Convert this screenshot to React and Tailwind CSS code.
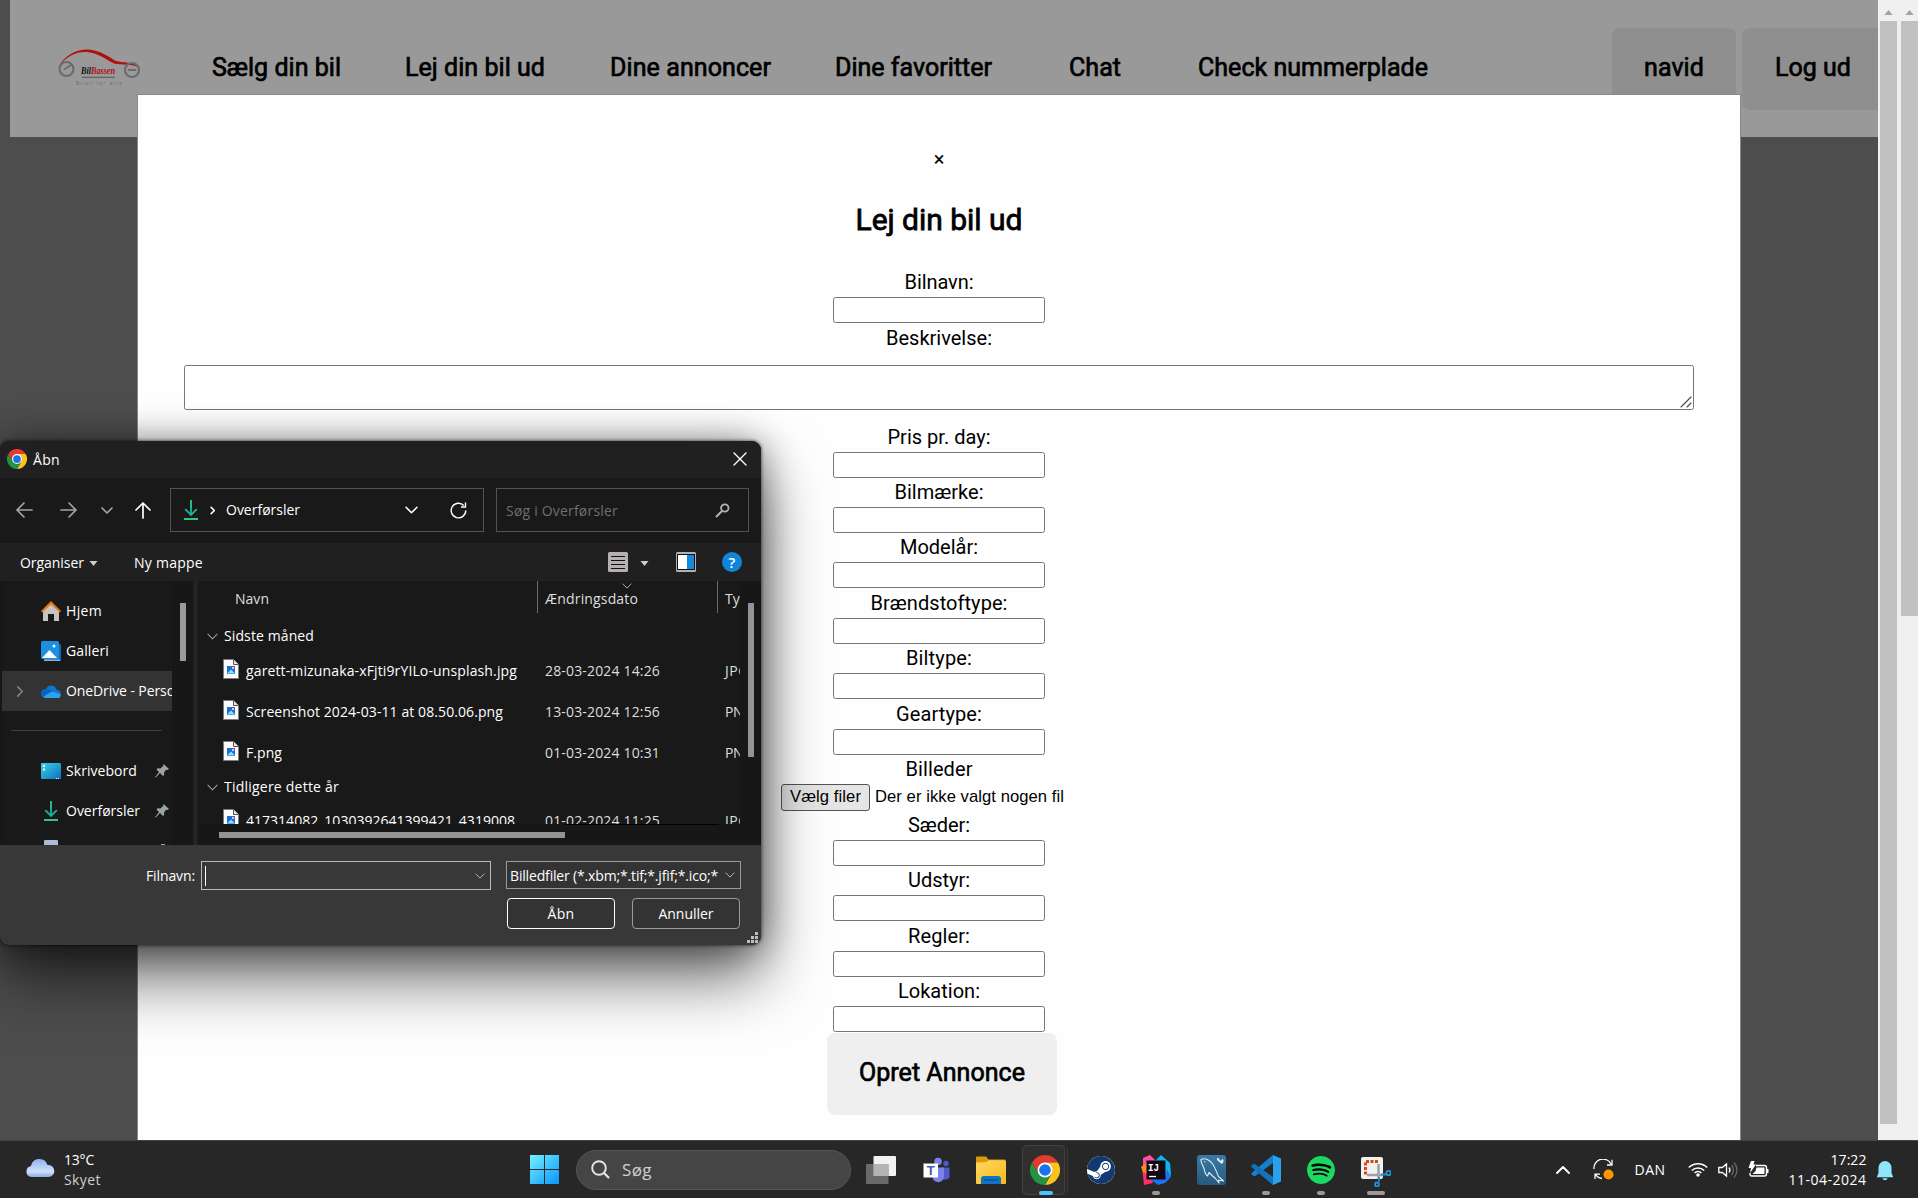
import React, { useLayoutEffect, useRef, useState } from "react";
import { SiSpotify, SiSteam } from "react-icons/si";

const ROBOTO = "font-[Roboto,sans-serif]";
const UI = "font-['Open_Sans','Noto_Sans',sans-serif]";

/* Single-line text whose tracking is adjusted to fill a given width. */
function Fit({ w, className = "", children }) {
  const ref = useRef(null);
  const [ls, setLs] = useState(0);
  useLayoutEffect(() => {
    const natural = ref.current.getBoundingClientRect().width;
    setLs((w - natural) / String(children).length);
  }, [w, children]);
  return (
    <span ref={ref} className={`inline-block shrink-0 whitespace-pre ${className}`} style={{ letterSpacing: `${ls}px` }}>
      {children}
    </span>
  );
}

function Chrome({ className }) {
  return (
    <svg viewBox="0 0 48 48" className={className}>
      <path fill="#e33b2e" d="M44.785 12A24 24 0 0 0 3.215 12L13.608 30 24 24V12Z" />
      <path fill="#fcc31e" d="M44.785 12H24V24L34.392 30 24 48A24 24 0 0 0 44.785 12Z" />
      <path fill="#229342" d="M3.215 12A24 24 0 0 0 24 48L34.392 30 24 24 13.608 30Z" />
      <circle cx="24" cy="24" r="12" fill="#fff" />
      <circle cx="24" cy="24" r="9.3" fill="#1a73e8" />
    </svg>
  );
}

function Line({ d, className, vb = "0 0 16 16", sw = 1.4 }) {
  return (
    <svg viewBox={vb} className={className} fill="none" stroke="currentColor" strokeWidth={sw} strokeLinecap="round" strokeLinejoin="round">
      <path d={d} />
    </svg>
  );
}

const ChevDown = ({ className, sw = 1.5 }) => <Line vb="0 0 12 7" d="M1 1l5 5 5-5" sw={sw} className={className} />;

function Download({ className }) {
  return (
    <svg viewBox="0 0 14 20" className={className} fill="none" strokeWidth="1.9">
      <path stroke="#2ec08a" d="M7 0v8" />
      <path stroke="#1fae9c" d="M7 8v7M1.2 9.2L7 15l5.8-5.8" />
      <path stroke="#35cf8b" d="M0 19h14" />
    </svg>
  );
}

function Logo() {
  return (
    <svg viewBox="0 0 84 42" className="h-[42px] w-[84px]">
      <path d="M1 18C8 6 20 1 30 1.500C42 2 51 9 58 13C64 15 76 13 82 20C74 15.500 64 17 56 15.500C48 12 41 5 29 4C18 3.500 9 8 1 18Z" fill="#b0100f" />
      <circle cx="8.500" cy="21" r="7" fill="none" stroke="#6c6c6c" strokeWidth="2.200" />
      <path d="M6 21.500L10 19L14 16" fill="none" stroke="#6c6c6c" strokeWidth="2" />
      <circle cx="74" cy="22" r="7" fill="none" stroke="#6c6c6c" strokeWidth="2.200" />
      <path d="M70 22H78" stroke="#6c6c6c" strokeWidth="2" />
      <text x="23" y="25.500" fontFamily="Liberation Serif" fontStyle="italic" fontWeight="700" fontSize="9.500" textLength="34" lengthAdjust="spacingAndGlyphs">
        <tspan fill="#111">Bil</tspan><tspan fill="#b0100f">Bassen</tspan>
      </text>
      <path d="M24 29.300H57" stroke="#555" strokeWidth="1" />
      <text x="18" y="36.500" fontFamily="Liberation Sans" fontSize="5" fill="#6e6e6e" textLength="46">Biler for alle</text>
    </svg>
  );
}

const NAV = [
  { t: "Sælg din bil", w: 129, ml: "ml-[70px]" },
  { t: "Lej din bil ud", w: 140, ml: "ml-[64px]" },
  { t: "Dine annoncer", w: 161, ml: "ml-[65px]" },
  { t: "Dine favoritter", w: 157, ml: "ml-[64px]" },
  { t: "Chat", w: 52, ml: "ml-[77px]" },
  { t: "Check nummerplade", w: 230, ml: "ml-[77px]" },
];

function Header() {
  return (
    <header className={`relative ml-[10px] flex h-[137px] items-start overflow-hidden bg-[#999] text-[25px] text-black [-webkit-text-stroke:0.7px_black] ${ROBOTO}`}>
      <div className="ml-[48px] mt-[48px] [-webkit-text-stroke:0px]"><Logo /></div>
      <nav className="flex pt-[50px] leading-[36px]">
        {NAV.map((n) => (
          <div key={n.t} className={n.ml}>
            <Fit w={n.w}>{n.t}</Fit>
          </div>
        ))}
      </nav>
      <div className="absolute left-[1602px] top-[28px] flex gap-[6px]">
        <div className="flex h-[82px] w-[124px] items-center justify-center rounded-[8px] bg-[#8f8f8f] pb-[2px]"><Fit w={60}>navid</Fit></div>
        <div className="flex h-[82px] w-[150px] items-center rounded-[8px] bg-[#8f8f8f] pb-[2px] pl-[33px]"><Fit w={76}>Log ud</Fit></div>
      </div>
    </header>
  );
}

const Label = ({ w, children }) => (
  <div className="flex h-[29.900px] shrink-0 items-center justify-center"><Fit w={w}>{children}</Fit></div>
);
const Box = () => <input className="block h-[26px] w-[212px] shrink-0 rounded-[2.5px] border border-[#767676] bg-white" />;

function Field({ w, children }) {
  return (
    <div className="flex h-[55.45px] shrink-0 flex-col items-center">
      <Label w={w}>{children}</Label>
      <Box />
    </div>
  );
}

function Modal() {
  return (
    <section className={`absolute left-[137px] top-[94px] flex h-[1060px] w-[1604px] flex-col items-center border border-[#888] bg-[#fefefe] text-[20px] leading-[24px] text-black ${ROBOTO}`}>
      <div className="mt-[52px] h-[24px] text-[20px]">×</div>
      <h2 className="mt-[31px] flex h-[36px] items-center text-[30px] font-normal [-webkit-text-stroke:0.8px_black]"><Fit w={167}>Lej din bil ud</Fit></h2>
      <div className="mt-[29.300px] flex h-[55.45px] flex-col items-center"><Label w={69}>Bilnavn:</Label><Box /></div>
      <Label w={106}>Beskrivelse:</Label>
      <div className="mb-[12px] mt-[12px] flex h-[45px] w-[1510px] shrink-0 items-end justify-end rounded-[2.5px] border border-[#767676] bg-white p-px">
        <Line vb="0 0 12 12" d="M1 11L11 1M7 11l4-4" sw={1.1} className="h-[12px] w-[12px] text-[#444]" />
      </div>
      <Field w={103}>Pris pr. day:</Field>
      <Field w={89}>Bilmærke:</Field>
      <Field w={78}>Modelår:</Field>
      <Field w={137}>Brændstoftype:</Field>
      <Field w={66}>Biltype:</Field>
      <Field w={86}>Geartype:</Field>
      <div className="flex h-[55.8px] shrink-0 flex-col items-center">
        <Label w={67}>Billeder</Label>
        <div className="flex h-[26.5px] w-[316px] items-center font-['Liberation_Sans',sans-serif] text-[16.600px]">
          <span className="flex h-[26.5px] w-[89px] items-center justify-center rounded-[3px] border border-[#555] bg-[#e5e5e5]"><Fit w={71}>Vælg filer</Fit></span>
          <Fit w={189} className="ml-[5px]">Der er ikke valgt nogen fil</Fit>
        </div>
      </div>
      <Field w={62}>Sæder:</Field>
      <Field w={62}>Udstyr:</Field>
      <Field w={62}>Regler:</Field>
      <Field w={82}>Lokation:</Field>
      <div className="ml-[6px] mt-[0.900px] flex h-[82px] w-[230px] shrink-0 items-center justify-center rounded-[8px] bg-[#efefef] pb-[1px] text-[25px] [-webkit-text-stroke:0.7px_black]"><Fit w={166}>Opret Annonce</Fit></div>
    </section>
  );
}

function Arrow() {
  return <svg viewBox="0 0 10 6" className="mx-auto mt-[9px] h-[5px] w-[9px]"><path d="M5 0l5 6H0z" fill="#a3a3a3" /></svg>;
}

function Scrollbars() {
  return (
    <div className="flex h-[1140px] w-[40px] gap-[4px] bg-[#f0f0f0] pl-[2px]">
      <div className="w-[17px]"><div className="h-[21px] pt-px"><Arrow /></div><div className="h-[1103px] bg-[#c1c1c1]" /></div>
      <div className="w-[17px]"><div className="h-[21px] pt-px"><Arrow /></div><div className="h-[595px] bg-[#c1c1c1]" /></div>
    </div>
  );
}

/* ---------- File dialog ---------- */

function FileIcon() {
  return (
    <svg viewBox="0 0 16 20" className="h-[20px] w-[16px]">
      <path d="M.5.5h10l5 5v14H.5z" fill="#fbfbfb" stroke="#7d7d7d" />
      <path d="M10.500.5v5h5" fill="#e4e4e4" stroke="#555" />
      <rect x="4" y="7" width="8" height="8" fill="#1a6fd0" />
      <path d="M8 7h4v4z" fill="#6a55b8" />
      <path d="M4 14.500l4-4 4 4z" fill="#8fe0fb" />
      <circle cx="10" cy="9" r=".9" fill="#fff" />
    </svg>
  );
}

function Pin() {
  return (
    <svg viewBox="0 0 14 14" className="h-[14px] w-[14px]">
      <path d="M8.500 0L14 5l-1.500 1-1.300-.2L9 8.500l.2 2.500L8 12 5 9 .8 13.500 0 13.200 4 8 1.500 5.500l1-1.200 2.700.3L8 2.200z" fill="#9aa3a8" />
    </svg>
  );
}

function SideRow({ icon, label, w, pin, cls = "", chev }) {
  return (
    <div className={`flex h-[40px] w-[170px] shrink-0 items-center overflow-hidden pl-[14px] ${cls}`}>
      <div className="w-[12px] shrink-0">{chev && <Line vb="0 0 7 12" d="M1 1l5 5-5 5" sw={1.7} className="h-[11px] w-[8px] text-[#858585]" />}</div>
      <div className="ml-[13px] flex w-[20px] shrink-0 justify-center">{icon}</div>
      <Fit w={w} className="ml-[5px]">{label}</Fit>
      {pin && <span className="ml-auto mr-[3px]"><Pin /></span>}
    </div>
  );
}

function Sidebar() {
  return (
    <aside className="flex h-[264px] w-[193px] overflow-hidden bg-[#171717] pl-[2px]">
      <div className="flex w-[170px] flex-col bg-[#191919] pt-[9.500px]">
        <SideRow label="Hjem" w={36} icon={
          <svg viewBox="0 0 20 20" className="h-[20px] w-[20px]"><path d="M2 9l8-7 8 7v11h-5v-7H7v7H2z" fill="#c4c4c4" /><path d="M0 10L10 0l10 10-1.200 1.500L10 3.500 1.200 11.500z" fill="#e87817" /></svg>} />
        <SideRow label="Galleri" w={43} icon={
          <svg viewBox="0 0 20 20" className="h-[20px] w-[20px]"><path d="M17 2l3 1.500V20H3v-2h14z" fill="#1069b8" /><path d="M3 18.500h16V20H3z" fill="#79b4e8" /><rect width="18" height="18" rx="1.500" fill="#1b8fe0" /><path d="M1 17l7.500-8 7.500 8z" fill="#fff" /><circle cx="13" cy="5" r="1.500" fill="#fff" /></svg>} />
        <SideRow chev cls="bg-[#333] pt-px" label="OneDrive - Perso" w={109} icon={
          <svg viewBox="0 0 20 13" className="h-[13px] w-[20px]"><path d="M5 4a5.500 5.500 0 0 1 10.500 1A4 4 0 0 1 16 13H4.500A4.300 4.300 0 0 1 5 4z" fill="#1173cf" /><path d="M5 4c3 0 5 2 8 4l-9 5A4.300 4.300 0 0 1 5 4z" fill="#0a62bd" /><path d="M2 12l8-5c3-1 5 1 9 2a2.500 2.500 0 0 1-2.500 4H4.500z" fill="#2aa4ec" /></svg>} />
        <div className="ml-[9px] mt-[19.500px] h-px w-[151px] shrink-0 bg-[#3f3f3f]" />
        <div className="h-[20px] shrink-0" />
        <SideRow pin label="Skrivebord" w={71} icon={
          <svg viewBox="0 0 20 16" className="h-[16px] w-[20px]"><defs><linearGradient id="dk" x2="1" y2="1"><stop stopColor="#38d6e0" /><stop offset="1" stopColor="#0f6cc5" /></linearGradient></defs><rect width="20" height="16" rx="1" fill="url(#dk)" /><path d="M2 2h2v2H2zM2 5.500h2v2H2zM15 15h1v1h-1zM17 15h1v1h-1z" fill="#e8ffff" /></svg>} />
        <SideRow pin label="Overførsler" w={74} icon={<Download className="h-[20px] w-[14px]" />} />
        <div className="flex h-[14px] shrink-0 items-start pl-[42px] pt-[8.500px]"><div className="h-[14px] w-[14px] rounded-t-[1px] bg-[#a9bdd6]" /><div className="ml-[103px] mt-[4px] h-[2px] w-[4px] bg-[#9aa3a8]" /></div>
      </div>
      <div className="ml-[8px] mt-[22px] h-[58px] w-[6px] bg-[#9a9a9a]" />
    </aside>
  );
}

function FileRow({ name, w, date, type, tw }) {
  return (
    <div className="flex h-[41px] shrink-0 items-center pl-[25px]">
      <div className="mb-[4px] shrink-0"><FileIcon /></div>
      <div className="ml-[7px] w-[299px] shrink-0 text-white"><Fit w={w}>{name}</Fit></div>
      <div className="w-[180px] shrink-0 text-[#dedede]"><Fit w={115}>{date}</Fit></div>
      <div className="shrink-0 text-[#dedede]"><Fit w={tw}>{type}</Fit></div>
    </div>
  );
}

function Group({ label, w }) {
  return (
    <div className="flex h-[27px] shrink-0 items-center pl-[9px]">
      <ChevDown sw={1.2} className="h-[7px] w-[11px] text-[#999]" />
      <Fit w={w} className="ml-[6px] text-white">{label}</Fit>
    </div>
  );
}

function FileList() {
  return (
    <div className="flex h-[264px] w-[563px] bg-[#171717]">
      <div className="w-[542px] shrink-0 bg-[#191919]">
        <div className="relative flex h-[243px] flex-col overflow-hidden">
          <div className="relative flex h-[32px] shrink-0 items-stretch text-[#dedede]">
            <div className="flex w-[340px] shrink-0 items-center border-r border-[#6a6a6a] pl-[37px] pt-[3px]"><Fit w={34}>Navn</Fit></div>
            <div className="flex w-[180px] shrink-0 items-center border-r border-[#6a6a6a] pl-[7px] pt-[3px]"><Fit w={93}>Ændringsdato</Fit></div>
            <div className="flex shrink-0 items-center pl-[7px] pt-[3px]"><Fit w={15}>Ty</Fit></div>
            <ChevDown sw={1.2} className="absolute left-[424px] top-[2px] h-[6px] w-[10px] text-[#aaa]" />
          </div>
          <div className="h-[9.500px] shrink-0" />
          <Group label="Sidste måned" w={90} />
          <div className="h-px shrink-0" />
          <FileRow name="garett-mizunaka-xFjti9rYILo-unsplash.jpg" w={271} date="28-03-2024 14:26" type="JPG" tw={24} />
          <FileRow name="Screenshot 2024-03-11 at 08.50.06.png" w={257} date="13-03-2024 12:56" type="PNG" tw={28} />
          <FileRow name="F.png" w={36} date="01-03-2024 10:31" type="PNG" tw={28} />
          <Group label="Tidligere dette år" w={115} />
          <FileRow name="417314082_1030392641399421_4319008" w={269} date="01-02-2024 11:25" type="JPG" tw={24} />
        </div>
        <div className="flex flex-col bg-[#171717]">
          <div className="ml-[367px] h-px w-[154px] bg-black" />
          <div className="ml-[21px] mt-[7px] h-[6px] w-[346px] bg-[#949494]" />
          <div className="h-[7px]" />
        </div>
      </div>
      <div className="ml-[8px] mt-[22px] h-[154px] w-[6px] bg-[#949494]" />
    </div>
  );
}

function Dialog() {
  return (
    <div className={`absolute left-0 top-[441px] flex h-[504px] w-[761px] flex-col overflow-hidden rounded-[9px] bg-[#191919] text-[14px] leading-[20px] text-white ${UI}`}>
      <div className="flex h-[37px] items-center bg-[#202020] pl-[7px] pr-[14px]">
        <Chrome className="mb-px h-[20px] w-[20px]" />
        <Fit w={27} className="ml-[6px]">Åbn</Fit>
        <Line d="M1 1l12 12M13 1L1 13" vb="0 0 14 14" sw={1.4} className="mb-px ml-auto h-[14px] w-[14px]" />
      </div>
      <div className="flex h-[65px] items-center pb-px text-[#a3a3a3]">
        <Line d="M1 8h15M8 1L1 8l7 7" vb="0 0 17 16" sw={1.7} className="ml-[16px] h-[16px] w-[17px]" />
        <Line d="M1 8h15M9 1l7 7-7 7" vb="0 0 17 16" sw={1.7} className="ml-[27px] h-[16px] w-[17px]" />
        <ChevDown sw={1.7} className="ml-[24px] h-[7px] w-[12px]" />
        <Line d="M8 1v15M1 8l7-7 7 7" vb="0 0 16 17" sw={1.7} className="ml-[22px] h-[17px] w-[16px] text-white" />
        <div className="ml-[19px] flex h-[44px] w-[314px] items-center border border-[#535353] text-white">
          <Download className="ml-[13px] h-[20px] w-[14px]" />
          <Line vb="0 0 6 10" d="M1 1.500L4.500 5 1 8.500" sw={1.7} className="ml-[12px] h-[9px] w-[6px]" />
          <Fit w={74} className="mb-px ml-[10px]">Overførsler</Fit>
          <ChevDown className="ml-auto h-[8px] w-[13px]" />
          <svg viewBox="0 0 17 17" className="ml-[32px] mr-[16px] h-[17px] w-[17px]" fill="none" stroke="#fff" strokeWidth="1.4"><path d="M15.800 8.500a7.300 7.300 0 1 1-2-5M15.500.5v4.500H11" /></svg>
        </div>
        <div className="ml-[12px] flex h-[44px] w-[253px] items-center border border-[#535353] text-[#6f6f6f]">
          <Fit w={112} className="ml-[9px] mt-px">Søg i Overførsler</Fit>
          <svg viewBox="0 0 15 15" className="ml-auto mr-[18px] h-[15px] w-[15px]" fill="none" stroke="#b5b5b5"><circle cx="9.800" cy="5" r="3.700" strokeWidth="1.8" /><path d="M7 8L1 14" strokeWidth="2" /></svg>
        </div>
      </div>
      <div className="flex h-[38px] items-center bg-[#202020] pl-[20px] pt-[2px]">
        <Fit w={64}>Organiser</Fit>
        <svg viewBox="0 0 8 5" className="ml-[5px] h-[5px] w-[9px]"><path d="M0 0h8L4 5z" fill="#ccc" /></svg>
        <Fit w={69} className="ml-[36px]">Ny mappe</Fit>
        <svg viewBox="0 0 20 20" className="mb-[2px] ml-auto h-[20px] w-[20px]"><rect width="20" height="20" rx="1.500" fill="#b5b1b2" /><path d="M3 4.500h14M3 8.500h14M3 12.500h14M3 16.500h14" stroke="#111" /></svg>
        <svg viewBox="0 0 8 5" className="ml-[12px] h-[5px] w-[9px]"><path d="M0 0h8L4 5z" fill="#ccc" /></svg>
        <svg viewBox="0 0 20 20" className="mb-[2px] ml-[27px] h-[20px] w-[20px]"><rect width="20" height="20" rx="1.500" fill="#b5b1b2" /><rect x="1.500" y="2.500" width="17" height="15" fill="#fff" stroke="#111" /><path d="M11 3h7v14h-7z" fill="#1489dd" /></svg>
        <div className="mb-[2px] ml-[26px] mr-[19px] flex h-[20px] w-[20px] items-center justify-center rounded-full bg-[#0f86d9] text-[15px] font-semibold">?</div>
      </div>
      <div className="flex h-[264px] bg-[#171717]">
        <Sidebar />
        <div className="w-[5px] shrink-0 bg-[#202020] pl-[2px]"><div className="h-full w-px bg-[#2b2b2b]" /></div>
        <FileList />
      </div>
      <div className="relative flex h-[100px] flex-col bg-[#383838] pt-[16px]">
        <div className="flex">
          <Fit w={49} className="ml-[146px] mt-[5px]">Filnavn:</Fit>
          <div className="ml-[6px] flex h-[29px] w-[290px] items-center border border-[#b9b9b9] pl-[3px] pr-[5px]">
            <div className="h-[20px] w-px bg-white" />
            <ChevDown sw={1.2} className="ml-auto h-[6px] w-[10px] text-[#b5b5b5]" />
          </div>
          <div className="ml-[15px] flex h-[28px] w-[235px] items-center border border-[#9b9b9b] bg-[#333] pl-[3px] pr-[5px]">
            <Fit w={208} className="mt-px">Billedfiler (*.xbm;*.tif;*.jfif;*.ico;*</Fit>
            <ChevDown sw={1.2} className="ml-auto h-[6px] w-[10px] text-[#b5b5b5]" />
          </div>
        </div>
        <div className="ml-[507px] mt-[8px] flex gap-[17px]">
          <div className="flex h-[31px] w-[108px] items-center justify-center rounded-[4px] border border-white bg-[#333]"><Fit w={27}>Åbn</Fit></div>
          <div className="flex h-[31px] w-[108px] items-center justify-center rounded-[4px] border border-[#9b9b9b] bg-[#333]"><Fit w={55}>Annuller</Fit></div>
        </div>
        <svg viewBox="0 0 11 11" className="absolute bottom-[2px] right-[3px] h-[11px] w-[11px]"><path d="M8 0h3v3H8zM4 4h3v3H4zM8 4h3v3H8zM0 8h3v3H0zM4 8h3v3H4zM8 8h3v3H8z" fill="#bdbdbd" /></svg>
      </div>
    </div>
  );
}

/* ---------- Taskbar ---------- */

const TaskView = () => (
  <svg viewBox="0 0 30 30" className="h-[30px] w-[30px]"><rect x="7.500" y="1" width="22.500" height="20" rx="1" fill="#f2f2f2" /><rect x="0" y="9" width="22.500" height="20" rx="1" fill="#777" opacity=".85" /><rect x="7.500" y="9" width="15" height="12" fill="#b4b4b4" /></svg>
);
const Teams = () => (
  <svg viewBox="0 0 26 26" className="h-[26px] w-[27px]"><circle cx="22.500" cy="6.500" r="2.700" fill="#5059c9" /><path d="M18 10.500h8v7a4 4 0 0 1-8 2z" fill="#5059c9" /><circle cx="14.500" cy="4.500" r="3.800" fill="#7b83eb" /><path d="M9 10.500h11.500v9a5.700 5.700 0 0 1-11.500 0z" fill="#7b83eb" /><rect x="0" y="6.500" width="14.500" height="14" fill="#fff" /><text x="7.300" y="18" textAnchor="middle" fontFamily="Liberation Sans" fontWeight="700" fontSize="13" fill="#4b53bc">T</text></svg>
);
const Explorer = () => (
  <svg viewBox="0 0 30 28" className="h-[28px] w-[30px]"><defs><linearGradient id="fo" x2="1" y2="1"><stop stopColor="#ffd766" /><stop offset="1" stopColor="#fbb917" /></linearGradient></defs><path d="M0 1.500Q0 .5 1 .5h9l2.500 3H29v6H0z" fill="#dc9a0b" /><path d="M0 6.500l10-.2 3-2H29q1 0 1 1V27q0 1-1 1H1q-1 0-1-1z" fill="url(#fo)" /><path d="M5 28v-5q0-3 3-3h14q3 0 3 3v5z" fill="#0f74c4" /><path d="M8 24h14" stroke="#0a4a88" strokeWidth="1.200" /></svg>
);
const IntelliJ = () => (
  <svg viewBox="0 0 30 30" className="h-[30px] w-[30px]"><path d="M2 3l7-3 6 6-8 12-5-4z" fill="#ff4fa3" /><path d="M1 12l6 2 5 14-9 2z" fill="#fe2f6a" /><path d="M0 12l5-4 4 12-7-3z" fill="#fb8a1e" /><path d="M14 6l6-6 9 8 1 12-5 5-3-15z" fill="#0bb7ee" /><path d="M8 24h16l2-10 4 8-6 6-7 2-4-3z" fill="#1a72f2" /><rect x="5.500" y="5.500" width="19" height="19" fill="#120914" /><text x="7" y="16" fontFamily="Liberation Mono" fontWeight="700" fontSize="11.500" textLength="11" lengthAdjust="spacingAndGlyphs" fill="#fff">IJ</text><path d="M8 21.500h7" stroke="#fff" strokeWidth="1.300" /></svg>
);
/* MySQL Workbench: leaping dolphin outline on a blue tile */
const Workbench = () => (
  <svg viewBox="0 0 29 30" className="h-[30px] w-[29px]">
    <defs><linearGradient id="wb" x2="0" y2="1"><stop stopColor="#3b7aa5" /><stop offset="1" stopColor="#265a80" /></linearGradient></defs>
    <rect width="29" height="30" rx="3" fill="url(#wb)" />
    <g fill="none" stroke="#dfeaf2" strokeWidth="1.100" strokeLinejoin="round" strokeLinecap="round">
      <path d="M4 4.500C8 2.500 13 5 16 9.500C18.500 13.500 20 18 21.500 21.500L26.500 26L21.500 25L22 28L18.500 23.500C16 21.500 13.500 19 12 17.500L10.500 21C8 19 7.500 16 7 13.500C6 10 3.500 8 4 4.500Z" />
      <path d="M7.500 6.800h.4" />
    </g>
    <path d="M20 3l2 .3.500 2 1.500.5 1.500-2 1 1.500-.5 3-2 .2-4-3.500z" fill="#e4edf3" />
  </svg>
);
const VsCode = () => (
  <svg viewBox="0 0 30 30" className="h-[30px] w-[30px]"><path d="M22 0v8L3.500 21.500.5 19.500v-1.500z" fill="#1380c8" /><path d="M0 11l3-2.500L22 22v8L.5 12z" fill="#0f73bd" /><path d="M22 0l8 3.500v23L22 30z" fill="#2aa0ee" /></svg>
);
const Snip = () => (
  <svg viewBox="0 0 30 30" className="h-[30px] w-[30px]"><rect x="0" y="0" width="22" height="22" rx="2" fill="#f1f1f1" /><path d="M17 4.500H4.500V18" fill="none" stroke="#d9480f" strokeWidth="3" strokeDasharray="3 1.500" /><path d="M17.500 7v15M6 18h16" stroke="#9aa2a8" strokeWidth="2.500" /><g fill="none" stroke="#1e93d8" strokeWidth="1.800"><circle cx="16" cy="27.500" r="2" /><circle cx="27.500" cy="16" r="2.200" /><path d="M18 24.500V20M25 17.500h-5" /></g></svg>
);

function TaskCell({ children, dot }) {
  return (
    <div className="relative flex h-[58px] w-[55px] items-center justify-center">
      {children}
      {dot && <div className={`absolute bottom-[4px] h-[4px] rounded-full ${dot}`} />}
    </div>
  );
}

function Taskbar() {
  return (
    <footer className={`relative flex h-[58px] w-full items-center border-t border-[#444] bg-[#272727] text-[14px] leading-[20px] text-white ${UI}`}>
      <svg viewBox="0 0 30 20" className="mb-[6px] ml-[25px] h-[20px] w-[30px]"><defs><linearGradient id="cl" x2="0" y2="1"><stop stopColor="#8fb1f0" /><stop offset=".7" stopColor="#cfe0fa" /><stop offset="1" stopColor="#8aabe8" /></linearGradient></defs><path d="M6 9a8.500 8.500 0 0 1 16.500-1A6 6 0 0 1 24 20H6A5.600 5.600 0 0 1 6 9z" fill="url(#cl)" /></svg>
      <div className="ml-[9px] flex w-[51px] flex-col items-start">
        <Fit w={30}>13°C</Fit><Fit w={37} className="text-[#cfcfcf]">Skyet</Fit>
      </div>
      <svg viewBox="0 0 29 29" className="ml-[415px] h-[29px] w-[29px]"><defs><linearGradient id="wi" x2="1" y2="1"><stop stopColor="#74f0ff" /><stop offset="1" stopColor="#0a95fb" /></linearGradient></defs><path d="M0 0h14v14H0zM15 0h14v14H15zM0 15h14v14H0zM15 15h14v14H15z" fill="url(#wi)" /></svg>
      <div className="ml-[17px] flex h-[40px] w-[275px] items-center rounded-full border border-[#565656] bg-[#454545] pl-[14px] text-[#d0d0d0]">
        <svg viewBox="0 0 19 19" className="h-[19px] w-[19px]" fill="none" stroke="#e6e6e6" strokeWidth="1.900"><circle cx="8" cy="8" r="6.800" /><path d="M13 13l5 5" strokeWidth="2.300" /></svg>
        <Fit w={30} className="ml-[12px] mt-px text-[17px]">Søg</Fit>
      </div>
      <div className="ml-[2.500px] flex">
        <TaskCell><TaskView /></TaskCell>
        <TaskCell><Teams /></TaskCell>
        <TaskCell><Explorer /></TaskCell>
        <TaskCell dot="w-[14px] bg-[#4cc2ff]">
          <div className="absolute left-[8px] top-[4px] h-[50px] w-[41px] rounded-[5px] border border-[#3b3a39]" />
          <div className="absolute left-[3px] top-[4px] h-[50px] w-[43px] rounded-[5px] border border-[#45423f] bg-[#302f2d]" />
          <Chrome className="relative mr-[3px] h-[30px] w-[30px]" />
        </TaskCell>
        <TaskCell>
          <div className="flex h-[28px] w-[28px] items-center justify-center rounded-full bg-white"><SiSteam className="h-[28px] w-[28px] text-[#123a70]" /></div>
        </TaskCell>
        <TaskCell dot="w-[8px] bg-[#9a9a9a]"><IntelliJ /></TaskCell>
        <TaskCell><Workbench /></TaskCell>
        <TaskCell dot="w-[8px] bg-[#9a9a9a]"><VsCode /></TaskCell>
        <TaskCell dot="w-[8px] bg-[#9a9a9a]"><div className="flex h-[28px] w-[28px] rounded-full bg-black"><SiSpotify className="h-[28px] w-[28px] text-[#1ed760]" /></div></TaskCell>
        <TaskCell dot="w-[18px] bg-[#9a9a9a]"><div className="mt-[5px]"><Snip /></div></TaskCell>
      </div>
      <Line vb="0 0 14 8" d="M1 7l6-6 6 6" sw={1.9} className="ml-[152px] h-[8px] w-[14px]" />
      <svg viewBox="0 0 21 21" className="ml-[23px] h-[21px] w-[21px]" fill="none" stroke="#fff" strokeWidth="1.300"><path d="M1 10A9 9 0 0 1 18 5M19 .8V6h-5M9 19.500C6 19 3.500 17.500 2.500 15M2 20v-4.800h5" /><circle cx="15.500" cy="15.500" r="5" fill="#ff9500" stroke="none" /></svg>
      <Fit w={31} className="ml-[21px] mt-px">DAN</Fit>
      <svg viewBox="0 0 20 15" className="ml-[22px] h-[15px] w-[20px]" fill="none" stroke="#fff" strokeWidth="1.500"><path d="M.8 5.500a13 13 0 0 1 18.400 0M3.800 8.500a8.800 8.800 0 0 1 12.400 0M6.600 11a4.800 4.800 0 0 1 6.800 0" /><circle cx="10" cy="13" r="1.800" fill="#fff" stroke="none" /></svg>
      <svg viewBox="0 0 20 18" className="ml-[10px] h-[18px] w-[20px]" fill="none" stroke="#fff" strokeWidth="1.300"><path d="M.8 6.500h3.500L8.500 3v12L4.300 11.500H.8zM11 6.500a4 4 0 0 1 0 5" /><path d="M13.500 4a7.500 7.500 0 0 1 0 10M16 1.500a11 11 0 0 1 0 15" stroke="#6a6a6a" /></svg>
      <svg viewBox="0 0 21 18" className="ml-[10px] h-[18px] w-[21px]"><path d="M8 4.500h8.500q2 0 2 2v6.500q0 2-2 2H4q-2 0-2-2v-1" fill="none" stroke="#fff" strokeWidth="1.400" /><path d="M8.500 6.500h8V13h-12l3-3zM19 8h1.500v4H19zM3 0l3.500 0L5.500 3.500H8L2 12l1-5H.5z" fill="#fff" /></svg>
      <div className="ml-[18px] flex w-[80px] flex-col items-end"><Fit w={36}>17:22</Fit><Fit w={78}>11-04-2024</Fit></div>
      <svg viewBox="0 0 16 20" className="ml-[10px] mt-[2px] h-[20px] w-[16px]" fill="#8fe6fc"><path d="M8 0a6.500 6.500 0 0 1 6.500 6.500V12L16 15.500v.8H0v-.8L1.500 12V6.500A6.500 6.500 0 0 1 8 0zM5.300 17.300h5.400A2.800 2.800 0 0 1 5.300 17.300z" /></svg>
    </footer>
  );
}

export default function App() {
  return (
    <div className="relative flex h-[1198px] w-[1918px] flex-col overflow-hidden bg-[#4d4d4d]">
      <div className="relative flex h-[1140px] overflow-hidden">
        <main className="relative h-[1140px] w-[1878px] overflow-hidden bg-[#4d4d4d]">
          <Header />
          <Modal />
        </main>
        <Scrollbars />
        <div className="absolute left-0 top-[441px] h-[504px] w-[761px] rounded-[9px] shadow-[0_0_3px_1px_rgba(0,0,0,0.45),0_32px_64px_0_rgba(0,0,0,0.6),0_2px_36px_rgba(0,0,0,0.45)]" />
        <Dialog />
      </div>
      <Taskbar />
    </div>
  );
}
